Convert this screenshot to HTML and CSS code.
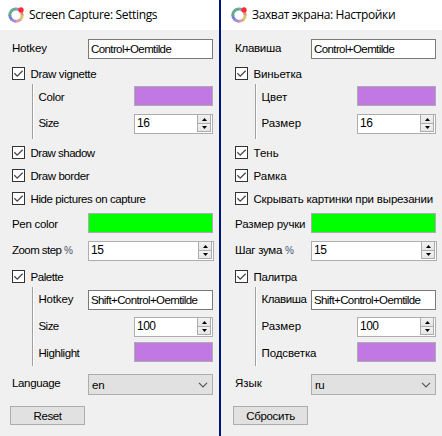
FILE: index.html
```
<!DOCTYPE html>
<html lang="en">
<head>
<meta charset="utf-8">
<title>Screen Capture: Settings</title>
<link rel="stylesheet" href="styles.css">
</head>
<body>
<svg class="defs" width="0" height="0">
  <symbol id="logo" viewBox="0 0 16 16">
    <g fill="none" stroke-width="3">
      <path d="M8 1.9A6.2 6.2 0 0 0 3 4.4" stroke="#6aa98c"/>
      <path d="M3.2 4.1A6.2 6.2 0 0 0 1.8 8.6" stroke="#62b07c"/>
      <path d="M1.8 8A6.2 6.2 0 0 0 4 12.9" stroke="#6e86d6"/>
      <path d="M3.6 12.5A6.2 6.2 0 0 0 8.2 14.2" stroke="#a78bd0"/>
      <path d="M7.8 14.2A6.2 6.2 0 0 0 12.6 12.2" stroke="#dc9cae"/>
      <path d="M12.3 12.6A6.2 6.2 0 0 0 14.2 8" stroke="#e0c46c"/>
      <path d="M14.2 8.2A6.2 6.2 0 0 0 12.6 4" stroke="#e08a80"/>
      <path d="M7.8 1.9A6.2 6.2 0 0 1 11.5 3" stroke="#7fa3c4"/>
    </g>
    <circle cx="13" cy="2.9" r="2.7" fill="#fb2c36"/>
  </symbol>
  <symbol id="tick" viewBox="0 0 13 13">
    <path d="M1.6 6.2L5 9.6L11.4 3.2" fill="none" stroke="#444" stroke-width="1.5"/>
  </symbol>
  <symbol id="up" viewBox="0 0 5 3"><path d="M0 3L2.5 0L5 3Z"/></symbol>
  <symbol id="down" viewBox="0 0 5 3"><path d="M0 0L2.5 3L5 0Z"/></symbol>
  <symbol id="chevron" viewBox="0 0 10 6">
    <path d="M1 .8L5 4.8L9 .8" fill="none" stroke="#555" stroke-width="1.2"/>
  </symbol>
</svg>
<div class="windows">
  <section class="window">
    <header class="title"><svg class="logo"><use href="#logo"/></svg><span>Screen Capture: Settings</span></header>
    <main class="form">
      <div class="row"><span class="label n20">Hotkey</span><div class="input n56">Control+Oemtilde</div></div>
      <div class="check first"><svg class="box"><use href="#tick"/></svg><span class="n35">Draw vignette</span></div>
      <div class="group vignette">
        <div class="row"><span class="label low n35">Color</span><div class="swatch small purple"></div></div>
        <div class="row"><span class="label n55">Size</span><div class="spin small"><span class="number">16</span><div class="arrows"><i><svg><use href="#up"/></svg></i><i><svg><use href="#down"/></svg></i></div></div></div>
      </div>
      <div class="checks">
        <div class="check"><svg class="box"><use href="#tick"/></svg><span class="n50">Draw shadow</span></div>
        <div class="check"><svg class="box"><use href="#tick"/></svg><span class="n42">Draw border</span></div>
        <div class="check"><svg class="box"><use href="#tick"/></svg><span class="n40">Hide pictures on capture</span></div>
      </div>
      <div class="row spaced"><span class="label low n30">Pen color</span><div class="swatch green"></div></div>
      <div class="row spaced"><span class="label n55">Zoom step <span class="percent">%</span></span><div class="spin wide"><span class="number">15</span><div class="arrows"><i><svg><use href="#up"/></svg></i><i><svg><use href="#down"/></svg></i></div></div></div>
      <div class="check palette-check"><svg class="box"><use href="#tick"/></svg><span class="n42">Palette</span></div>
      <div class="group palette">
        <div class="row"><span class="label n20">Hotkey</span><div class="input n56">Shift+Control+Oemtilde</div></div>
        <div class="row"><span class="label n55">Size</span><div class="spin small"><span class="number">100</span><div class="arrows"><i><svg><use href="#up"/></svg></i><i><svg><use href="#down"/></svg></i></div></div></div>
        <div class="row"><span class="label low n42">Highlight</span><div class="swatch small purple"></div></div>
      </div>
      <div class="row spaced"><span class="label n35">Language</span><div class="combo"><span class="n15">en</span><svg><use href="#chevron"/></svg></div></div>
      <div class="button n42">Reset</div>
    </main>
  </section>
  <section class="window second" lang="ru">
    <header class="title"><svg class="logo"><use href="#logo"/></svg><span>Захват экрана: Настройки</span></header>
    <main class="form">
      <div class="row"><span class="label n25">Клавиша</span><div class="input n56">Control+Oemtilde</div></div>
      <div class="check first"><svg class="box"><use href="#tick"/></svg><span class="n13">Виньетка</span></div>
      <div class="group vignette">
        <div class="row"><span class="label low">Цвет</span><div class="swatch small purple"></div></div>
        <div class="row"><span class="label">Размер</span><div class="spin small"><span class="number">16</span><div class="arrows"><i><svg><use href="#up"/></svg></i><i><svg><use href="#down"/></svg></i></div></div></div>
      </div>
      <div class="checks">
        <div class="check"><svg class="box"><use href="#tick"/></svg><span>Тень</span></div>
        <div class="check"><svg class="box"><use href="#tick"/></svg><span>Рамка</span></div>
        <div class="check"><svg class="box"><use href="#tick"/></svg><span class="n20">Скрывать картинки при вырезании</span></div>
      </div>
      <div class="row spaced"><span class="label low n15">Размер ручки</span><div class="swatch green"></div></div>
      <div class="row spaced"><span class="label n30">Шаг зума <span class="percent">%</span></span><div class="spin wide"><span class="number">15</span><div class="arrows"><i><svg><use href="#up"/></svg></i><i><svg><use href="#down"/></svg></i></div></div></div>
      <div class="check palette-check"><svg class="box"><use href="#tick"/></svg><span class="n35">Палитра</span></div>
      <div class="group palette">
        <div class="row"><span class="label n42">Клавиша</span><div class="input n56">Shift+Control+Oemtilde</div></div>
        <div class="row"><span class="label">Размер</span><div class="spin small"><span class="number">100</span><div class="arrows"><i><svg><use href="#up"/></svg></i><i><svg><use href="#down"/></svg></i></div></div></div>
        <div class="row"><span class="label low n10">Подсветка</span><div class="swatch small purple"></div></div>
      </div>
      <div class="row spaced"><span class="label">Язык</span><div class="combo"><span class="n50">ru</span><svg><use href="#chevron"/></svg></div></div>
      <div class="button n30">Сбросить</div>
    </main>
  </section>
</div>
</body>
</html>
```
FILE: styles.css
```
* { box-sizing: border-box; }
body {
  margin: 0;
  font-family: "Liberation Sans", Arial, sans-serif;
  font-size: 11.5px;
  color: #000;
  background: #f0f0f0;
}
.defs { display: block; }
.windows {
  display: grid;
  grid-template-columns: 219px 223px;
  height: 436px;
  overflow: hidden;
}
.window { background: #f0f0f0; white-space: nowrap; }
.second { border-left: 2px solid #00147a; }
.second .title, .second .form { padding-left: 2px; }
.title {
  display: flex;
  align-items: center;
  height: 30px;
  background: #fff;
  font: 12px/30px "Open Sans", sans-serif;
  letter-spacing: -0.36px;
}
.logo { width: 16px; height: 16px; margin: 0 5px 0 8px; }

.form { width: 221px; padding-top: 9px; }
.window:first-child .form { width: 219px; }
.row {
  display: flex;
  justify-content: space-between;
  align-items: flex-start;
  height: 20px;
  padding: 0 6px 0 12px;
}
.label { line-height: 18px; }
.low { line-height: 22px; }
.spaced { margin-top: 8px; }
.percent { color: #46526a; font-size: 10px; }

.input, .swatch, .spin, .combo { width: 125px; height: 20px; flex: none; }
.input {
  padding-left: 2px;
  border: 1px solid #7a7a7a;
  background: #fff;
  line-height: 18px;
}
.swatch { border: 1px solid #adadad; }
.purple { background: #c278e2; }
.green { background: #0f0; }
.spin {
  display: flex;
  justify-content: space-between;
  padding: 0 1px 1px 2px;
  border: 1px solid #abadb3;
  background: #fff;
  line-height: 16px;
}
.number { font-size: 12px; letter-spacing: -0.5px; }
.swatch.small, .spin.small { width: 79px; }
.spin.wide { width: 126px; margin-right: -1px; }
.arrows { display: grid; grid-template-rows: 9px 8px; width: 14px; }
.arrows i {
  display: flex;
  align-items: center;
  justify-content: center;
  border: 1px solid #acacac;
  border-top: 0;
  background: linear-gradient(#f2f2f2, #e6e6e6);
}
.arrows svg { width: 5px; height: 3px; }

.check { display: flex; height: 13px; padding-left: 12px; gap: 5.5px; line-height: 14px; }
.box { width: 13px; height: 13px; border: 1px solid #333; background: #fff; }
.first { margin-top: 8px; }
.checks { display: flex; flex-direction: column; gap: 10px; margin-top: 7px; }
.palette-check { margin-top: 9px; }

.group {
  display: flex;
  flex-direction: column;
  margin: 4px 0 0 32px;
  border-left: 1px solid #a0a0a0;
  box-shadow: inset 1px 0 #fff;
}
.group .row { padding-left: 5.5px; }
.vignette { gap: 8px; height: 55px; padding-top: 2px; }
.palette { height: 79px; padding-top: 3px; gap: 7px; }
.palette .row:last-child { margin-top: -2px; }

.combo {
  display: flex;
  justify-content: space-between;
  align-items: center;
  height: 21px;
  padding: 0 4px 0 3px;
  border: 1px solid #adadad;
  background: #e1e1e1;
  line-height: 20px;
}
.combo svg { width: 10px; height: 6px; }
.button {
  width: 75px;
  height: 19px;
  margin: 12px 0 0 10px;
  border: 1px solid #adadad;
  background: #e1e1e1;
  text-align: center;
  line-height: 18px;
}

.n10 { letter-spacing: -0.1px; }
.n13 { letter-spacing: -0.13px; }
.n15 { letter-spacing: -0.15px; }
.n20 { letter-spacing: -0.18px; }
.n25 { letter-spacing: -0.26px; }
.n30 { letter-spacing: -0.3px; }
.n35 { letter-spacing: -0.35px; }
.n40 { letter-spacing: -0.4px; }
.n42 { letter-spacing: -0.43px; }
.n50 { letter-spacing: -0.5px; }
.n55 { letter-spacing: -0.55px; }
.n56 { letter-spacing: -0.6px; }
```
